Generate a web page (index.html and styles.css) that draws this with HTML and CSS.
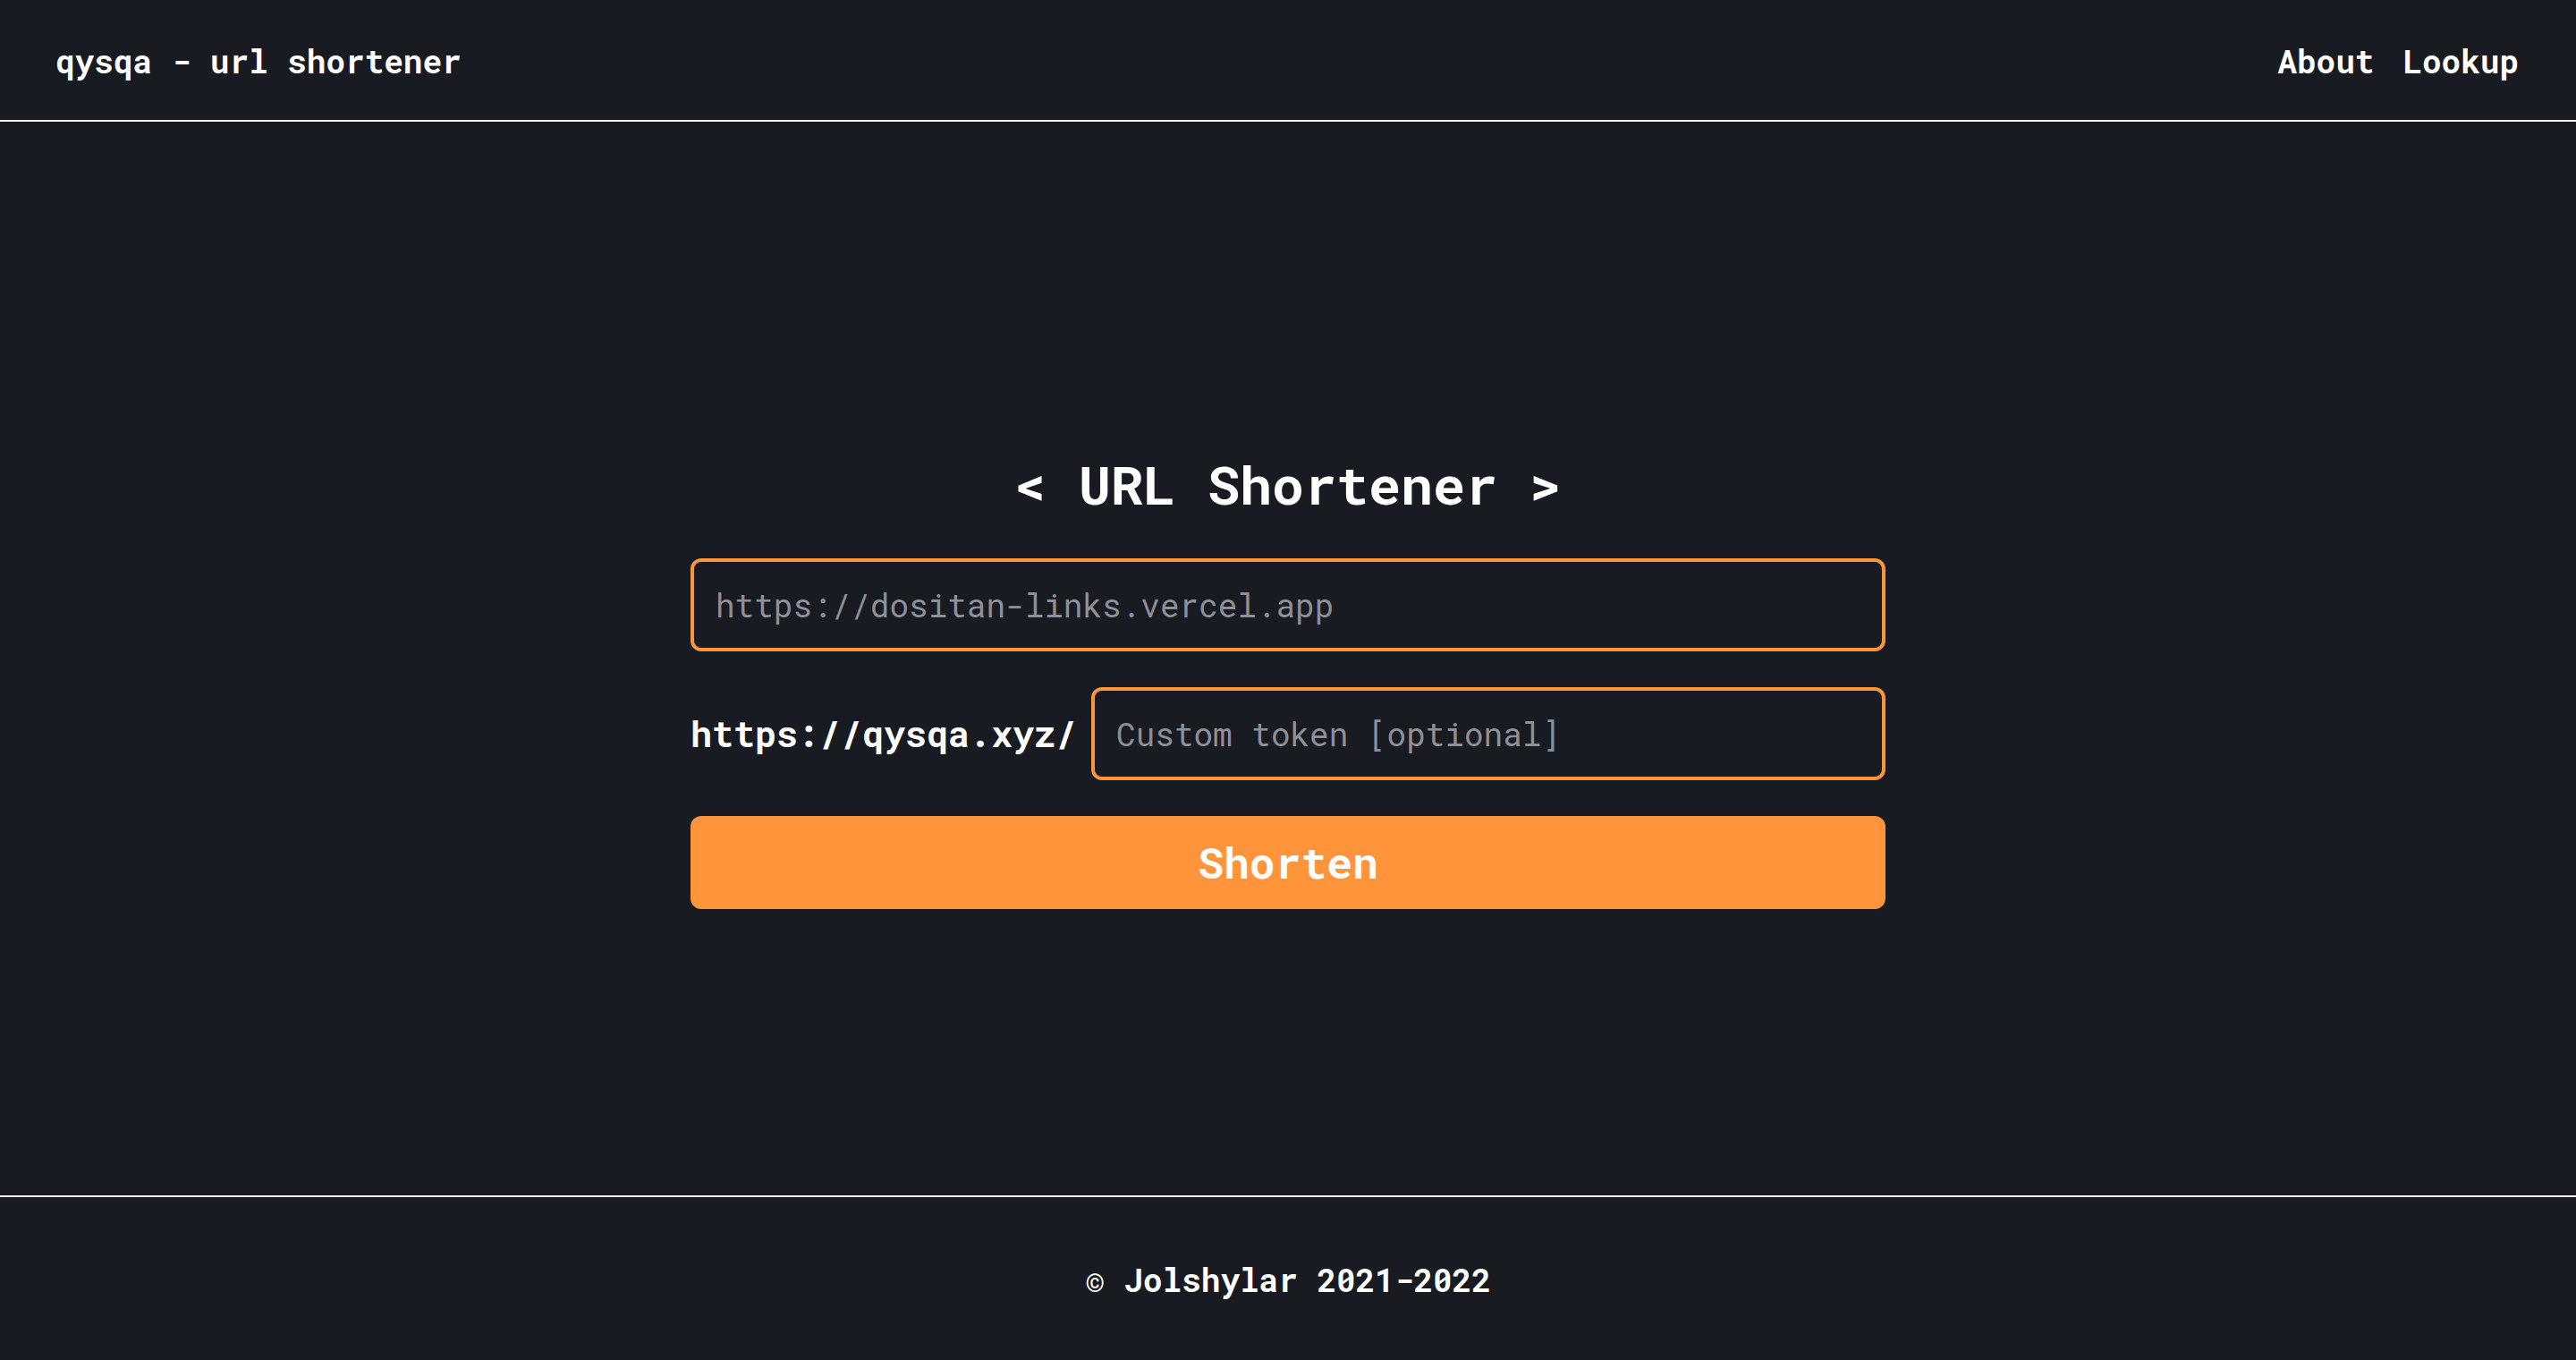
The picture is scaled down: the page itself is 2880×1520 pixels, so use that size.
FILE: index.html
```html
<!DOCTYPE html>
<html lang="en">
<head>
<meta charset="utf-8">
<title>qysqa - url shortener</title>
<link rel="stylesheet" href="styles.css">
</head>
<body>
<header class="topbar">
  <a class="brand" href="#">qysqa - url shortener</a>
  <nav class="nav">
    <a href="#">About</a>
    <a href="#">Lookup</a>
  </nav>
</header>
<main class="main">
  <form class="shortener">
    <h1 class="title">&lt; URL Shortener &gt;</h1>
    <input class="field" type="text" placeholder="https://dositan-links.vercel.app">
    <div class="token-row">
      <span class="prefix">https://qysqa.xyz/</span>
      <input class="field" type="text" placeholder="Custom token [optional]">
    </div>
    <button class="submit" type="button">Shorten</button>
  </form>
</main>
<footer class="footer">
  <p class="copy">© Jolshylar 2021-2022</p>
</footer>
</body>
</html>
```

FILE: styles.css
```css
* { box-sizing: border-box; }

html, body {
  margin: 0;
  padding: 0;
}

body {
  background: #191b23;
  color: #ffffff;
  font-family: "Roboto Mono", "DejaVu Sans Mono", "Liberation Mono", monospace;
  height: 1520px;
  display: flex;
  flex-direction: column;
}

a { color: inherit; text-decoration: none; }

.topbar {
  height: 136px;
  border-bottom: 2px solid #ffffff;
  display: flex;
  align-items: center;
  justify-content: space-between;
  padding: 2px 64px 0 62px;
}

.brand {
  font-size: 36px;
  font-weight: 700;
}

.nav {
  display: flex;
  gap: 32px;
  font-size: 36px;
  font-weight: 700;
}

.main {
  height: 1200px;
  display: flex;
  align-items: center;
  justify-content: center;
  padding-top: 48px;
}

.shortener {
  width: 1336px;
  display: flex;
  flex-direction: column;
  gap: 40px;
  margin: 0;
}

.title {
  margin: 0 0 7px 0;
  height: 72px;
  line-height: 72px;
  font-size: 60px;
  font-weight: 700;
  text-align: center;
}

.field {
  height: 104px;
  width: 100%;
  border: 4px solid #ff943a;
  border-radius: 12px;
  background: #191b23;
  color: #ffffff;
  padding: 0 24px;
  font-family: inherit;
  font-size: 36px;
  outline: none;
}

.field::placeholder {
  color: #8d9099;
}

.token-row {
  display: flex;
  align-items: center;
  gap: 16px;
}

.prefix {
  font-size: 40px;
  font-weight: 700;
  white-space: nowrap;
}

.token-row .field {
  flex: 1;
  width: auto;
}

.submit {
  height: 104px;
  border: none;
  border-radius: 12px;
  background: #ff943a;
  color: #ffffff;
  font-family: inherit;
  font-size: 48px;
  font-weight: 700;
  cursor: pointer;
}

.footer {
  height: 184px;
  border-top: 2px solid #ffffff;
  display: flex;
  align-items: center;
  justify-content: center;
  padding-top: 2px;
}

.copy {
  margin: 0;
  font-size: 36px;
  font-weight: 700;
}
```
